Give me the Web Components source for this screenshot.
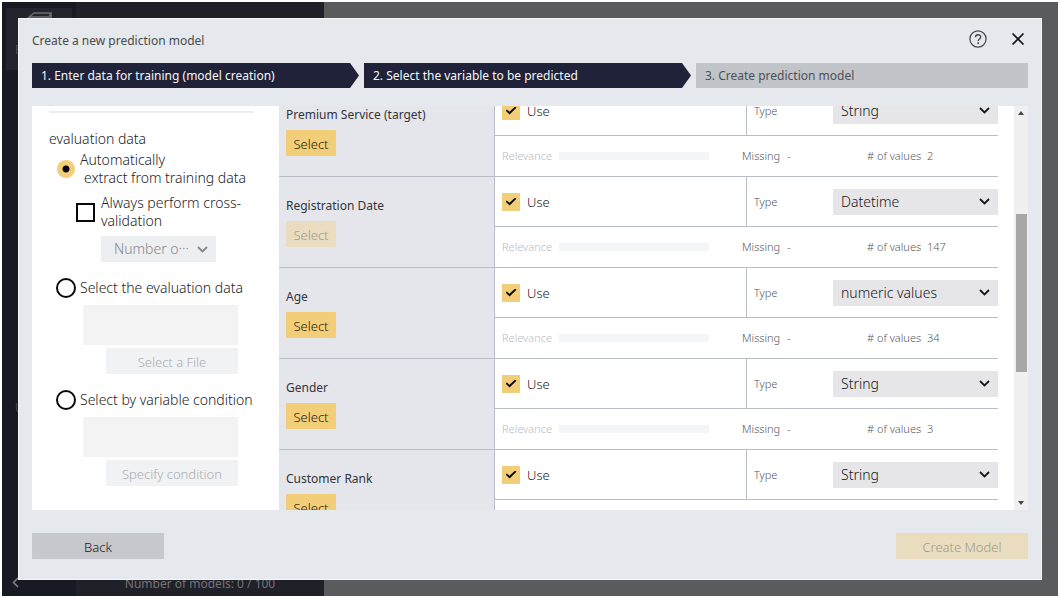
<!DOCTYPE html>
<html lang="en">
<head>
<meta charset="utf-8">
<title>Create a new prediction model</title>
<style>
html, body { height: 100%; margin: 0; }
body { background: #fff; font: 300 14px/18px "Noto Sans", sans-serif; color: #222329; }
</style>
</head>
<body>
<app-shell>
  <model-dialog>
    <step-bar slot="steps"></step-bar>
    <evaluation-panel slot="side"></evaluation-panel>
    <scroll-pane slot="main"><variable-table></variable-table></scroll-pane>
  </model-dialog>
</app-shell>

<script>
function define(name, html, setup) {
  const template = document.createElement('template');
  template.innerHTML = html;
  customElements.define(name, class extends HTMLElement {
    constructor() {
      super();
      this.attachShadow({ mode: 'open' }).append(template.content.cloneNode(true));
    }
    connectedCallback() { if (setup) setup(this, this.shadowRoot); }
  });
}

/* Drop-down with its own chevron */
define('select-box', `
<style>
:host { display: block; }
.box { display: grid; align-items: center; background: #e6e6e9; height: 26px; }
select, svg { grid-area: 1 / 1; }
select { appearance: none; border: 0; border-radius: 0; background: none; margin: 0; width: 100%; height: 26px;
  padding: 0 24px 0 8px; font: inherit; color: #16171c; opacity: 1; }
svg { justify-self: end; margin-right: 8px; width: 11px; height: 7px; pointer-events: none; fill: none; stroke: #17181c; stroke-width: 1.800; }
:host([disabled]) .box { background: #eceef0; }
:host([disabled]) select { color: #88898c; padding-left: 13px; }
:host([disabled]) svg { stroke: #85868a; }
</style>
<div class="box"><select></select><svg viewBox="0 0 11 7"><path d="M1 1l4.500 4.500L10 1"/></svg></div>`,
(host, root) => {
  const select = root.querySelector('select');
  select.append(new Option(host.getAttribute('value')));
  select.disabled = host.hasAttribute('disabled');
  select.setAttribute('aria-label', host.getAttribute('label'));
});

/* Push button: primary, neutral or quiet */
define('action-button', `
<style>
:host { display: inline-block; }
button { display: block; box-sizing: border-box; width: 100%; height: 26px; margin: 0; padding: 1px 0 0; border: 0; border-radius: 1px;
  font: inherit; font-size: 13px; font-weight: 300; background: #f3ce78; color: #1f1b10; }
:host([kind=neutral]) button { background: #c7c8cd; color: #16171c; }
:host([kind=quiet]) button { background: #f1f2f4; color: #acadb1; }
:host([kind=primary][disabled]) button { background: #eaddbf; color: #9c9994; }
</style>
<button type="button"><slot></slot></button>`,
(host, root) => { root.querySelector('button').disabled = host.hasAttribute('disabled'); });

/* Dimmed application behind the dialog */
define('app-shell', `
<style>
:host { display: flex; position: relative; box-sizing: border-box; height: 100%; padding: 2px; background: #fff; }
nav { display: flex; flex-direction: column; width: 74px; box-sizing: border-box; background: #171a22; color: #5c5d62; }
.tile { display: flex; flex-direction: column; gap: 8px; margin: 6px 4px 0; height: 62px; box-sizing: border-box; padding: 4px 0 0 9px;
  background: #24252c; font-size: 12px; line-height: 16px; }
.tile svg { margin-left: 12px; width: 26px; height: 22px; fill: none; stroke: #6d6e72; stroke-width: 1.500; }
.users { margin: auto 0; padding: 250px 0 0 13px; font-size: 12px; line-height: 16px; }
.back { margin: auto 0 7px 9px; width: 8px; height: 13px; padding: 0; border: 0; background: none; }
.back svg { display: block; width: 8px; height: 13px; fill: none; stroke: #85868a; stroke-width: 1.500; }
aside { display: flex; align-items: flex-end; justify-content: center; box-sizing: border-box; width: 248px; padding-bottom: 3px; background: #202128;
  color: #727378; font-size: 12px; font-weight: 400; }
main { flex: 1; background: #5a5b5d; }
.overlay { position: absolute; inset: 18px; display: flex; }
</style>
<nav>
  <div class="tile"><svg viewBox="0 0 26 22"><path d="M2 5L7 1H24L22 5ZM2 5V21M24 1V17"/></svg><span>P</span></div>
  <div class="users">U</div>
  <button class="back" aria-label="Collapse"><svg viewBox="0 0 8 13"><path d="M7 2L2.500 6.500L7 11"/></svg></button>
</nav>
<aside>Number of models: 0 / 100</aside>
<main></main>
<div class="overlay"><slot></slot></div>`);

/* Dialog frame */
define('model-dialog', `
<style>
:host { display: flex; flex: 1; flex-direction: column; min-width: 0; box-sizing: border-box; border: 1px solid #f4f6f8; background: #e5e8ed; padding: 0 13px 20px; }
header { display: flex; align-items: flex-start; box-sizing: border-box; height: 44px; flex: none; padding-top: 11px; }
h1 { flex: 1; margin: 0; font-size: 12px; font-weight: 400; line-height: 22px; color: #4b4c4c; }
header button { padding: 0; border: 0; background: none; width: 18px; height: 18px; }
header svg { display: block; width: 18px; height: 18px; fill: none; stroke: #44454a; stroke-width: 1.200; }
.close { margin: 0 1px 0 22px; }
.close svg { stroke: #111216; stroke-width: 1.700; }
.body { display: flex; flex: 1; min-height: 0; margin-top: 18px; background: #fff; overflow: hidden; }
::slotted([slot=side]) { width: 247px; flex: none; }
::slotted([slot=main]) { flex: 1; min-width: 0; }
footer { display: flex; justify-content: space-between; margin-top: 23px; }
footer action-button { width: 132px; }
</style>
<header>
  <h1>Create a new prediction model</h1>
  <button aria-label="Help"><svg viewBox="0 0 18 18"><circle cx="9" cy="9" r="8.100"/><path d="M6.500 7.200C6.500 3.900 11.700 3.900 11.700 7C11.700 9 9.200 8.900 9.200 11.100" stroke-width="1.400"/><path d="M9.200 12.300V13.900" stroke-width="1.500"/></svg></button>
  <button class="close" aria-label="Close"><svg viewBox="0 0 18 18"><path d="M3.500 3.500L14.500 14.500M14.500 3.500L3.500 14.500"/></svg></button>
</header>
<slot name="steps"></slot>
<div class="body"><slot name="side"></slot><slot name="main"></slot></div>
<footer>
  <action-button kind="neutral">Back</action-button>
  <action-button kind="primary" disabled>Create Model</action-button>
</footer>`);

/* Wizard steps */
define('step-bar', `
<style>
:host { display: block; flex: none; }
ol { display: grid; grid-template-columns: 327fr 327fr 332fr; gap: 5px; margin: 0; padding: 0; list-style: none; font-size: 12px; font-weight: 400; line-height: 26px; }
li { padding: 0 9px; height: 25px; background: #1f2239; color: #f6f6f8; white-space: nowrap;
  clip-path: polygon(0 0, calc(100% - 9px) 0, 100% 50%, calc(100% - 9px) 100%, 0 100%); }
li:last-child { background: #c1c4c9; color: #4f5054; clip-path: none; }
</style>
<ol>
  <li>1. Enter data for training (model creation)</li>
  <li>2. Select the variable to be predicted</li>
  <li>3. Create prediction model</li>
</ol>`);

/* Evaluation data settings */
define('evaluation-panel', `
<style>
:host { display: block; box-sizing: border-box; padding: 5px 25px 0 17px; background: #fff; }
hr { margin: 0 0 17px; border: 0; height: 2px; background: #eeeeee; }
fieldset { display: flex; flex-direction: column; margin: 0; padding: 0; border: 0; min-width: 0; }
legend { padding: 0; }
.opt { display: flex; align-items: center; gap: 4px; margin-left: 7px; white-space: nowrap; }
.first { margin-top: 3px; }
.second-line { display: block; padding-left: 4px; }
input { appearance: none; box-sizing: border-box; flex: none; margin: 0; background: #fff; border: 2px solid #08080a; }
input[type=radio] { width: 20px; height: 20px; border-radius: 50%; }
input[type=radio]:checked { border: 1px solid #fff; background: radial-gradient(circle, #08080a 3px, #f3ce78 4px); }
input[type=checkbox] { width: 19px; height: 19px; }
.cross { display: flex; align-items: center; gap: 6px; margin: 7px 0 0 27px; }
select-box { width: 115px; margin: 6px 0 0 52px; }
.next { margin-top: 16px; line-height: 20px; }
textarea { display: block; box-sizing: border-box; margin: 7px 16px 0 34px; height: 40px; padding: 0; border: 0; resize: none; background: #f3f3f3; }
action-button { width: 132px; margin: 3px 16px 0 0; align-self: flex-end; }
</style>
<hr>
<fieldset>
  <legend>evaluation data</legend>
  <label class="opt first"><input type="radio" name="source" checked><span>Automatically<span class="second-line">extract from training data</span></span></label>
  <label class="cross"><input type="checkbox"><span>Always perform cross-<br>validation</span></label>
  <select-box value="Number o···" label="Number of folds" disabled></select-box>
  <label class="opt next"><input type="radio" name="source"><span>Select the evaluation data</span></label>
  <textarea disabled aria-label="Evaluation file"></textarea>
  <action-button kind="quiet" disabled>Select a File</action-button>
  <label class="opt next"><input type="radio" name="source"><span>Select by variable condition</span></label>
  <textarea disabled aria-label="Variable condition"></textarea>
  <action-button kind="quiet" disabled>Specify condition</action-button>
</fieldset>`);

/* Variables and their types */
define('variable-table', `
<style>
:host { display: block; }
table { width: 100%; table-layout: fixed; border-spacing: 0; }
th, td { box-sizing: border-box; padding: 0; border-bottom: 1px solid #b9bdc7; font-weight: 300; text-align: left; }
th { vertical-align: top; padding: 20px 0 0 7px; border-right: 1px solid #b9bdc7; background: #e5e6eb; font-size: 12px; font-weight: 400; line-height: 18px; color: #33343a; }
th action-button { display: block; width: 50px; margin-top: 6px; }
.top td { height: 50px; }
.stats td { height: 41px; }
.use { padding-left: 7px; }
.use label { display: flex; align-items: center; gap: 7px; font-size: 13px; }
input { appearance: none; width: 18px; height: 18px; margin: 0; background: #f3ce78; display: grid; place-items: center; }
input:checked::before { content: ""; width: 11px; height: 8px; background: #0d0b05; clip-path: polygon(0 50%, 12% 36%, 36% 66%, 88% 0, 100% 15%, 37% 100%); }
.type { border-left: 1px solid #b9bdc7; }
.type div { display: grid; grid-template-columns: 79px 1fr; align-items: center; padding-left: 7px; }
.type span, .stats { font-size: 11px; color: #58595d; }
.line { display: grid; grid-template-columns: 57px 150px 33px 45px 80px 60px 1fr; align-items: center; padding-left: 7px; }
.line span { white-space: nowrap; }
.line .rel { color: #b9babd; }
.bar { height: 8px; background: #f4f5f7; }
</style>
<table>
  <colgroup><col style="width:216px"><col><col style="width:252px"></colgroup>
  <tbody></tbody>
</table>`,
(host, root) => {
  const rows = [
    ['Premium Service (target)', 'String', '2', ''],
    ['Registration Date', 'Datetime', '147', 'disabled'],
    ['Age', 'numeric values', '34', ''],
    ['Gender', 'String', '3', ''],
    ['Customer Rank', 'String', '', '']
  ];
  root.querySelector('tbody').innerHTML = rows.map(([name, type, count, state]) => `
    <tr class="top">
      <th rowspan="2" scope="rowgroup">${name}<action-button kind="primary" ${state}>Select</action-button></th>
      <td class="use"><label><input type="checkbox" checked>Use</label></td>
      <td class="type"><div><span>Type</span><select-box value="${type}" label="Type of ${name}"></select-box></div></td>
    </tr>
    <tr class="stats"><td colspan="2">${count && `<div class="line">
      <span class="rel">Relevance</span><span class="bar"></span><span></span>
      <span>Missing</span><span>-</span><span># of values</span><span>${count}</span>
    </div>`}</td></tr>`).join('');
});

/* Scrolled area with a drawn scroll bar */
define('scroll-pane', `
<style>
:host { display: flex; min-height: 0; background: #fff; }
.view { flex: 1; min-width: 0; overflow: hidden; margin-right: 16px; }
.track { display: flex; flex-direction: column; align-items: center; width: 14px; box-sizing: border-box; background: #f0f0f1; padding: 5px 0; }
.track svg { width: 6px; height: 4px; fill: #46474a; }
.thumb { width: 11px; flex: 157; background: #a7a7a8; }
.before { flex: 99; }
.after { flex: 129; }
</style>
<div class="view"><slot></slot></div>
<div class="track">
  <svg viewBox="0 0 6 4"><path d="M0 4L3 0L6 4Z"/></svg>
  <div class="before"></div><div class="thumb"></div><div class="after"></div>
  <svg viewBox="0 0 6 4"><path d="M0 0L3 4L6 0Z"/></svg>
</div>`);
document.querySelector('scroll-pane').shadowRoot.querySelector('.view').scrollTop = 20;
</script>
</body>
</html>
